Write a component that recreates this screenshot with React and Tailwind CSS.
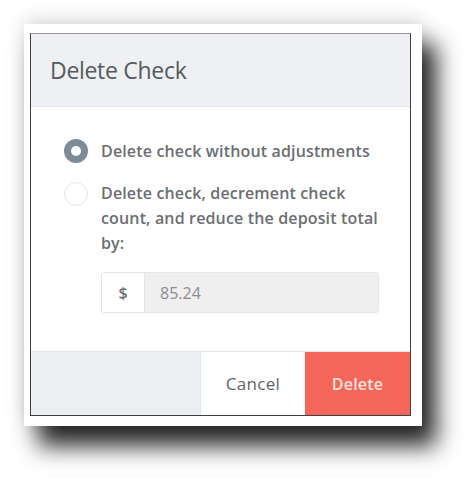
export default function App() {
  return (
    <div className="w-[474px] h-[478px] bg-white overflow-hidden" style={{ fontFamily: "'Open Sans', sans-serif" }}>
      <div className="ml-[24px] mt-[24px] w-[398px] h-[402px] bg-white pl-[6px] pt-[9px] pr-[11px] pb-[10px] shadow-[14px_20px_22px_rgba(0,0,0,0.85),0_-4px_18px_rgba(0,0,0,0.14)]">
        <div className="flex flex-col h-full border border-[#3f3f3f] border-t-[#9a9a9a]">
          <div className="h-[73px] bg-[#eef0f3] flex items-center pl-[19px] border-b border-[#e2e5e9]">
            <h2 className="text-[23px] text-[#555a5e] tracking-[-0.3px]">Delete Check</h2>
          </div>
          <div className="flex-1 bg-white pl-[33px] pt-[32px]">
            <label className="flex items-center gap-[13px]">
              <span className="w-[24px] h-[24px] rounded-full bg-[#7d8b97] flex items-center justify-center">
                <span className="w-[10px] h-[10px] rounded-full bg-white"></span>
              </span>
              <span className="text-[16px] tracking-[0.15px] font-semibold text-[#6b6e72]">Delete check without adjustments</span>
            </label>
            <label className="flex items-start gap-[13px] mt-[18px]">
              <span className="w-[24px] h-[24px] mt-[1px] shrink-0 rounded-full border border-[#e4e6e9] bg-white"></span>
              <span className="text-[16px] tracking-[0.15px] font-semibold text-[#6b6e72] leading-[25px] w-[282px]">
                Delete check, decrement check count, and reduce the deposit total by:
              </span>
            </label>
            <div className="ml-[37px] mt-[16px] w-[278px] h-[41px] flex border border-[#e3e5e8] rounded-[3px]">
              <div className="w-[43px] flex items-center justify-center bg-white text-[16px] font-semibold text-[#6b6e72] border-r border-[#e3e5e8]">$</div>
              <div className="flex-1 bg-[#efefef] flex items-center pl-[15px] text-[16px] text-[#8a8d90]">85.24</div>
            </div>
          </div>
          <div className="h-[64px] flex border-t border-[#e2e5e9]">
            <div className="w-[169px] bg-[#eceff2]"></div>
            <button className="w-[105px] bg-white text-[17px] tracking-[0.3px] text-[#5f6367] border-l border-[#e2e5e9]">Cancel</button>
            <button className="flex-1 bg-[#f5675a] text-[16px] tracking-[0.2px] font-semibold text-[#fbe3df]">Delete</button>
          </div>
        </div>
      </div>
    </div>
  );
}
